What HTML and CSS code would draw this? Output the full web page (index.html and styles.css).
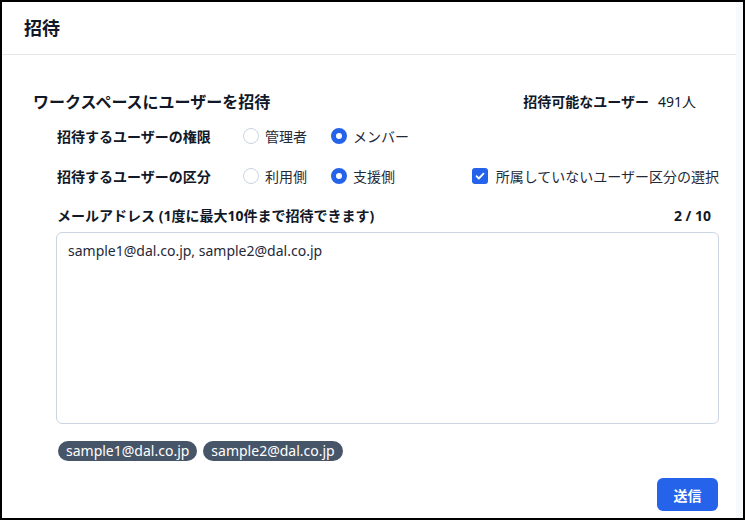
FILE: index.html
```html
<!DOCTYPE html>
<html lang="ja">
<head>
    <meta charset="UTF-8">
    <meta name="viewport" content="width=device-width, initial-scale=1.0">
    <title>招待</title>
    <link rel="stylesheet" href="styles.css">
</head>
<body>
    <div class="frame">
        <div class="panel">
            <div class="panel-header">
                <h1>招待</h1>
            </div>

            <div class="panel-body">
                <div class="title-row">
                    <h2>ワークスペースにユーザーを招待</h2>
                    <div class="quota">
                        <span class="quota-label">招待可能なユーザー</span>
                        <span class="quota-value">491人</span>
                    </div>
                </div>

                <div class="form">
                    <div class="form-row">
                        <div class="form-label">招待するユーザーの権限</div>
                        <label class="radio">
                            <span class="radio-mark"></span>管理者
                        </label>
                        <label class="radio">
                            <span class="radio-mark checked"></span>メンバー
                        </label>
                    </div>

                    <div class="form-row">
                        <div class="form-label">招待するユーザーの区分</div>
                        <label class="radio">
                            <span class="radio-mark"></span>利用側
                        </label>
                        <label class="radio">
                            <span class="radio-mark checked"></span>支援側
                        </label>
                        <label class="checkbox">
                            <span class="checkbox-mark">
                                <svg viewBox="0 0 16 16" width="16" height="16">
                                    <path d="M4.5 8.2l2.3 2.3 4.7-4.8" fill="none" stroke="#fff" stroke-width="1.8" stroke-linecap="round" stroke-linejoin="round"/>
                                </svg>
                            </span>所属していないユーザー区分の選択
                        </label>
                    </div>

                    <div class="mail-label-row">
                        <span>メールアドレス (1度に最大10件まで招待できます)</span>
                        <span>2 / 10</span>
                    </div>

                    <div class="mail-box">sample1@dal.co.jp, sample2@dal.co.jp</div>

                    <div class="chips">
                        <span class="chip">sample1@dal.co.jp</span>
                        <span class="chip">sample2@dal.co.jp</span>
                    </div>

                    <div class="actions">
                        <button class="btn-primary">送信</button>
                    </div>
                </div>
            </div>
        </div>
    </div>
</body>
</html>
```

FILE: styles.css
```css
:root {
    --text: #111827;
    --border: #cbd5e1;
    --primary: #2563eb;
    --chip: #475569;
    --side: #f8f9fb;
}

* {
    margin: 0;
    padding: 0;
    box-sizing: border-box;
}

body {
    font-family: 'Noto Sans', 'Noto Sans CJK JP', sans-serif;
    color: var(--text);
    background: #000;
    padding: 2px;
    height: 520px;
    overflow: hidden;
}

.frame {
    background: var(--side);
    height: 516px;
    padding-right: 7px;
}

.panel {
    background: #fff;
    height: 100%;
}

.panel-header {
    height: 53px;
    padding-left: 22px;
    border-bottom: 1px solid #e5e7eb;
    display: flex;
    align-items: center;
}

.panel-header h1 {
    font-size: 18px;
    font-weight: bold;
    line-height: 24px;
}

.panel-body {
    padding: 34px 17px 0 31px;
}

.title-row {
    display: flex;
    justify-content: space-between;
    align-items: center;
    height: 24px;
    padding-right: 25px;
}

.title-row h2 {
    font-size: 16px;
    font-weight: bold;
}

.quota {
    font-size: 14px;
    display: flex;
    gap: 9px;
    margin-right: -2px;
}

.quota-label {
    font-weight: bold;
}

.form {
    margin-left: 23px;
    margin-top: 3px;
}

.form-row {
    display: flex;
    align-items: center;
    height: 40px;
    font-size: 14px;
}

.form-label {
    width: 187px;
    font-weight: bold;
    padding-left: 1px;
}

.radio {
    display: flex;
    align-items: center;
    gap: 6px;
    width: 88px;
    color: #1f2937;
}

.radio-mark {
    width: 16px;
    height: 16px;
    border-radius: 50%;
    border: 1px solid var(--border);
    background: #fff;
}

.radio-mark.checked {
    border: 5px solid var(--primary);
}

.checkbox {
    margin-left: auto;
    display: flex;
    align-items: center;
    gap: 8px;
    color: #1f2937;
}

.checkbox-mark {
    width: 16px;
    height: 16px;
    border-radius: 3px;
    background: var(--primary);
    display: flex;
}

.mail-label-row {
    display: flex;
    justify-content: space-between;
    font-size: 14px;
    font-weight: bold;
    line-height: 20px;
    padding: 0 8px 0 1px;
    margin-top: 10px;
    margin-bottom: 6px;
}

.mail-box {
    height: 192px;
    border: 1px solid var(--border);
    border-radius: 6px;
    padding: 8px 11px;
    font-size: 14px;
    line-height: 20px;
    color: #1f2937;
}

.chips {
    display: flex;
    gap: 6px;
    margin-top: 17px;
    padding-left: 2px;
}

.chip {
    background: var(--chip);
    color: #fff;
    font-size: 14px;
    line-height: 20px;
    padding: 0 8px;
    border-radius: 10px;
}

.actions {
    display: flex;
    justify-content: flex-end;
    margin-top: 17px;
    padding-right: 1px;
}

.btn-primary {
    font-family: inherit;
    background: var(--primary);
    color: #fff;
    border: none;
    border-radius: 6px;
    width: 61px;
    height: 33px;
    font-size: 14px;
    font-weight: bold;
}
```
